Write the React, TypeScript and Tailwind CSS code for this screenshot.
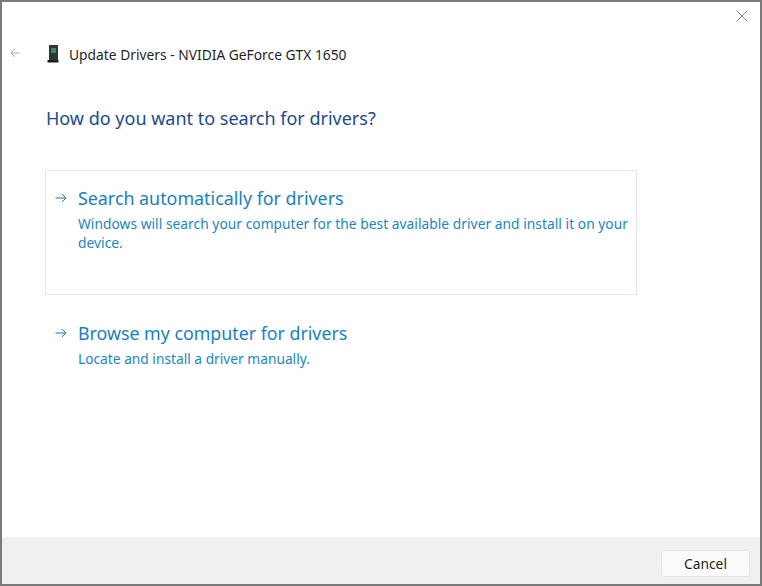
export default function App() {
  const font = { fontFamily: '"Noto Sans", "Open Sans", sans-serif' };
  const Arrow = () => (
    <svg width="12" height="10" viewBox="0 0 12 10" fill="none" stroke="#1a72b4" strokeWidth="1" className="shrink-0">
      <path d="M0.5 5H11M7 1.2L11 5L7 8.8" />
    </svg>
  );
  return (
    <div className="w-[762px] h-[586px] bg-white border-2 border-[#7a7a7a] flex flex-col" style={font}>
      <div className="flex-1 flex flex-col relative">
        <svg width="12" height="12" viewBox="0 0 12 12" fill="none" stroke="#8a8a8a" strokeWidth="1" className="absolute right-[12px] top-[8px]">
          <path d="M0.5 0.5L11.5 11.5M11.5 0.5L0.5 11.5" />
        </svg>
        <div className="flex items-center h-[20px] mt-[42px] pl-[8px]">
          <svg width="10" height="10" viewBox="0 0 10 10" fill="none" stroke="#a4a4a4" strokeWidth="1" className="shrink-0 mb-[2px]">
            <path d="M9.5 5H1M4.5 1.2L1 5L4.5 8.8" />
          </svg>
          <svg width="12" height="18" viewBox="0 0 12 18" className="shrink-0 ml-[27px]">
            <rect x="2" y="0" width="9" height="15" fill="#2b3a35" />
            <rect x="4" y="3" width="5" height="5" fill="#3d8a58" />
            <rect x="0.5" y="15" width="11" height="2.5" fill="#1c1c1c" />
          </svg>
          <span className="ml-[10px] mt-[2px] text-[13.8px] leading-[20px] text-[#1f1f1f]">Update Drivers - NVIDIA GeForce GTX 1650</span>
        </div>
        <h1 className="ml-[44px] mt-[40px] text-[18px] leading-[28px] font-normal text-[#1c4a94]">How do you want to search for drivers?</h1>
        <div className="ml-[43px] mt-[38px] w-[592px] h-[125px] border border-[#dbe9f1] pt-[13px] pl-[9px] pr-[4px] flex flex-col">
          <div className="flex items-center">
            <Arrow />
            <span className="ml-[11px] text-[17.85px] leading-[28px] text-[#1a80c4]">Search automatically for drivers</span>
          </div>
          <p className="ml-[23px] mt-[2px] text-[13.76px] leading-[19px] tracking-[0.045px] text-[#1a86c8]">Windows will search your computer for the best available driver and install it on your device.</p>
        </div>
        <div className="ml-[53px] mt-[24px] flex items-center">
          <Arrow />
          <span className="ml-[11px] text-[17.8px] leading-[28px] text-[#1a80c4]">Browse my computer for drivers</span>
        </div>
        <p className="ml-[76px] mt-[2px] text-[13.76px] leading-[19px] text-[#1a86c8]">Locate and install a driver manually.</p>
      </div>
      <div className="h-[47px] bg-[#f0f0f0] flex items-start justify-end pt-[13px] pr-[10px]">
        <button className="w-[89px] h-[27px] bg-[#fbfbfb] border border-[#e6e6e6] rounded-[3px] text-[13.8px] leading-[25px] text-[#1f1f1f]">Cancel</button>
      </div>
    </div>
  );
}
